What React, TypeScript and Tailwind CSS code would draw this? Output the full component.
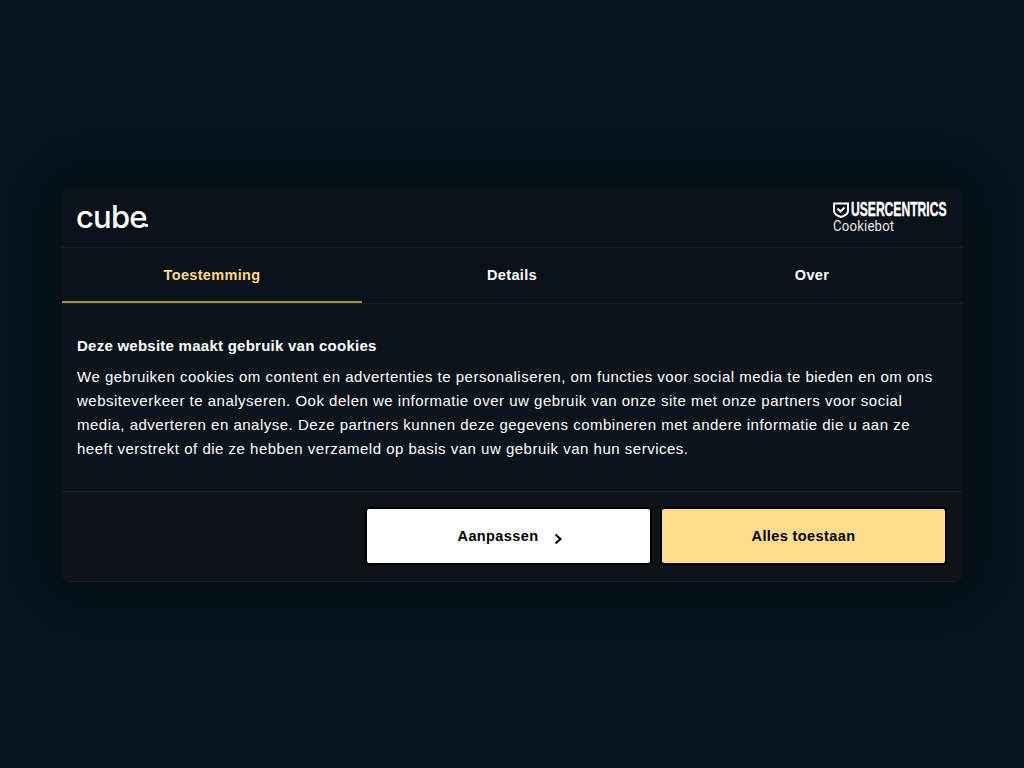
const sans = "font-['Liberation_Sans',Arial,sans-serif]";

function Tab({ label, active }: { label: string; active?: boolean }) {
  return (
    <div
      className={`flex h-[55px] flex-1 items-center justify-center border-b-2 pt-[2px] text-[14.5px] font-bold tracking-[0.33px] ${
        active ? "border-[#a68c53] text-[#ffd987]" : "border-transparent text-white"
      }`}
    >
      {label}
    </div>
  );
}

export default function App() {
  return (
    <div className={`${sans} flex h-[768px] w-[1024px] flex-col items-center bg-[#06141d] pt-[186px]`}>
      <div className="w-[900px] overflow-hidden rounded-[6px] bg-[#0a1118] shadow-[0_0_60px_20px_rgba(4,10,15,0.4)]">
        <div className="flex h-[62px] items-center justify-between border-b border-[#1a1f22] px-[15px]">
          <div className="relative -ml-[1px] flex items-center">
            <span className="font-['Inter',sans-serif] text-[31px] leading-none font-medium tracking-[-0.8px] text-white">cube</span>
            <span className="absolute right-[-1px] bottom-[5px] h-[3px] w-[3px] bg-white" />
          </div>
          <div className="flex w-[114px] flex-col text-white">
            <div className="mt-[2px] flex h-[17px] items-center gap-[2px]">
              <svg width="16" height="16" viewBox="0 0 16 16" fill="none">
                <path d="M1 1.500h14v7.500c0 3-3.500 4.800-7 6-3.500-1.200-7-3-7-6z" stroke="#fff" strokeWidth="2" />
                <path d="M4.500 6.500l3 3 4-4" stroke="#fff" strokeWidth="2" />
              </svg>
              <span className="inline-block w-[96px] origin-left scale-x-[0.605] text-[20px] leading-[17px] font-bold whitespace-nowrap [-webkit-text-stroke:0.4px_#fff]">USERCENTRICS</span>
            </div>
            <span className="inline-block origin-left scale-x-[0.94] font-['Roboto',sans-serif] text-[14px] leading-[16px] tracking-[0.2px] whitespace-nowrap text-[#e8e8e8]">Cookiebot</span>
          </div>
        </div>
        <div className="flex border-b border-[#1a1f22]">
          <Tab label="Toestemming" active />
          <Tab label="Details" />
          <Tab label="Over" />
        </div>
        <div className="border-b border-[#1a1f22] bg-[#0c141b] px-[15px] pt-[30px] pb-[30px] text-white">
          <h2 className="text-[15px] leading-[24px] font-bold tracking-[0.25px]">Deze website maakt gebruik van cookies</h2>
          <p className="mt-[7px] text-[15px] leading-[24px] tracking-[0.5px]">
            We gebruiken cookies om content en advertenties te personaliseren, om functies voor social media te bieden en om ons websiteverkeer te analyseren. Ook delen we informatie over uw gebruik van onze site met onze partners voor social media, adverteren en analyse. Deze partners kunnen deze gegevens combineren met andere informatie die u aan ze heeft verstrekt of die ze hebben verzameld op basis van uw gebruik van hun services.
          </p>
        </div>
        <div className="flex justify-end gap-[8px] border-b border-[#1a1f22] bg-[#0d1319] px-[15px] pt-[15px] pb-[16px] text-[14.5px] font-bold tracking-[0.4px] text-black">
          <button className="flex h-[58px] w-[287px] items-center justify-center rounded-[4px] border-2 border-black bg-white pt-[2px] pl-[4px]">
            Aanpassen
            <svg className="mt-[3px] ml-[15px]" width="10" height="12" viewBox="0 0 10 12" fill="none">
              <path d="M2.500 1.500L7.500 6l-5 4.500" stroke="#000" strokeWidth="2" />
            </svg>
          </button>
          <button className="flex h-[58px] w-[287px] items-center justify-center rounded-[4px] border-2 border-black bg-[#ffdd8a] pt-[2px]">
            Alles toestaan
          </button>
        </div>
      </div>
    </div>
  );
}
